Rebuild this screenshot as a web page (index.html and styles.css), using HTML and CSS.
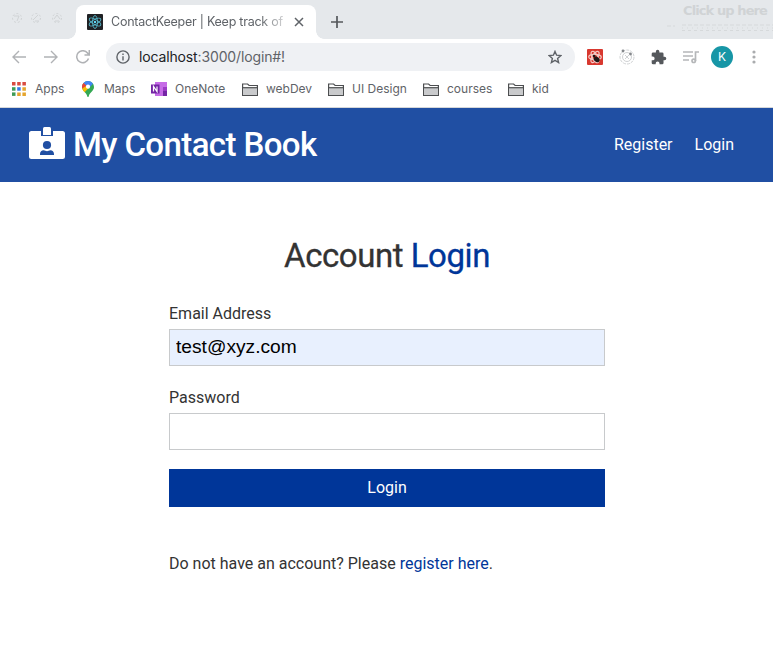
FILE: index.html
```html
<!DOCTYPE html>
<html lang="en">
<head>
<meta charset="utf-8">
<title>ContactKeeper | Keep track of</title>
<link rel="stylesheet" href="styles.css">
</head>
<body>
<div class="browser">
  <div class="tabstrip">
    <div class="lights">
      <svg width="52" height="14" viewBox="0 0 52 14" fill="none" stroke="#d0d3d5"><g stroke-dasharray="2 2"><circle cx="6" cy="7" r="4.500"/><circle cx="25" cy="7" r="4.500"/><circle cx="46" cy="7" r="4.500"/></g><path d="M3 5h5l-2 5M22 9l5-5M24 10h4M43 8l3-4 3 4M44 10h4"/></svg>
    </div>
    <div class="tab">
      <svg class="favicon" width="16" height="16" viewBox="0 0 16 16"><rect width="16" height="16" rx="1" fill="#202124"/><g fill="none" stroke="#56b5c8" stroke-width=".9"><ellipse cx="8" cy="8" rx="6.500" ry="2.500" transform="rotate(30 8 8)"/><ellipse cx="8" cy="8" rx="6.500" ry="2.500" transform="rotate(90 8 8)"/><ellipse cx="8" cy="8" rx="6.500" ry="2.500" transform="rotate(150 8 8)"/></g><circle cx="8" cy="8" r="1.200" fill="#61dafb"/></svg>
      <span class="tab-title">ContactKeeper | Keep track of</span>
      <svg class="close" width="10" height="10" viewBox="0 0 10 10" stroke="#5f6368" stroke-width="1.5"><path d="M1 1l8 8M9 1l-8 8"/></svg>
    </div>
    <svg class="plus" width="12" height="12" viewBox="0 0 12 12" stroke="#55585c" stroke-width="1.7"><path d="M6 0v12M0 6h12"/></svg>
    <div class="hint"><span>Click up here</span><svg width="106" height="8" viewBox="0 0 106 8" fill="none" stroke="#d6d9db"><path d="M0 2h8M15 1h106" stroke-dasharray="4 2"/><path d="M15 4h91" stroke-dasharray="1 4"/><path d="M15 6.500h91" stroke-dasharray="3 3"/></svg></div>
  </div>

  <div class="toolbar">
    <svg width="14" height="14" viewBox="0 0 14 14" fill="none" stroke="#b0b2b5" stroke-width="1.4"><path d="M14 7H1.500M7 1L1 7l6 6"/></svg>
    <svg width="14" height="14" viewBox="0 0 14 14" fill="none" stroke="#b0b2b5" stroke-width="1.4"><path d="M0 7h12.500M7 1l6 6-6 6"/></svg>
    <svg width="14" height="14" viewBox="0 0 14 14" fill="none" stroke="#b0b2b5" stroke-width="1.5"><path d="M12.500 8.500A6 6 0 1 1 11.500 3L13 5M13.300 0v5H8.500"/></svg>
    <div class="address">
      <svg width="14" height="14" viewBox="0 0 14 14" fill="none" stroke="#5f6368" stroke-width="1.4"><circle cx="7" cy="7" r="6.100"/><path d="M7 6.200v4.200M7 3.500v1.500"/></svg>
      <span class="url">localhost<span>:3000/login#!</span></span>
      <svg class="star" width="14" height="14" viewBox="0 0 14 14" fill="none" stroke="#5f6368" stroke-width="1.4"><path d="M7 1.400l1.600 3.800 4.200.4-3.200 2.800 1 4.100L7 10.300l-3.600 2.200 1-4.100L1.200 5.600l4.200-.4z"/></svg>
    </div>
    <div class="extensions">
      <svg width="16" height="16" viewBox="0 0 16 16"><rect width="16" height="16" rx="1" fill="#d8382f"/><g fill="none" stroke="#f5c9c5" stroke-width="1.200"><ellipse cx="8" cy="8" rx="6.300" ry="2.700"/><ellipse cx="8" cy="8" rx="6.300" ry="2.700" transform="rotate(60 8 8)"/><ellipse cx="8" cy="8" rx="6.300" ry="2.700" transform="rotate(120 8 8)"/></g><ellipse cx="10" cy="10.500" rx="3.200" ry="2.500" transform="rotate(40 10 10)" fill="#201818"/><circle cx="7" cy="7" r="1.300" fill="#201818"/></svg>
      <svg width="16" height="16" viewBox="0 0 16 16" fill="none" stroke="#d0d2d4"><circle cx="8" cy="8" r="7" stroke-dasharray="3 1"/><circle cx="8" cy="8" r="4.500"/><path d="M6 6l4 4M10 6l-4 4"/><g fill="#85888c" stroke="none"><circle cx="4" cy="2" r="1.400"/><circle cx="11.500" cy="5" r="1.400"/></g></svg>
      <svg width="16" height="16" viewBox="1 0 23 23" fill="#55585c"><path d="M20.500 11H19V7a2 2 0 0 0-2-2h-4V3.500a2.500 2.500 0 0 0-5 0V5H4a2 2 0 0 0-2 2v3.800h1.500a2.700 2.700 0 0 1 0 5.400H2V20a2 2 0 0 0 2 2h3.800v-1.500a2.700 2.700 0 0 1 5.400 0V22H17a2 2 0 0 0 2-2v-4h1.500a2.500 2.500 0 0 0 0-5z"/></svg>
      <svg width="17" height="14" viewBox="0 0 17 14" fill="none" stroke="#b5b7b9" stroke-width="1.700"><path d="M1 2h10M1 6h10M1 10h6M13.500 11V2H17"/><circle cx="11.700" cy="10.800" r="1.700"/></svg>
      <span class="avatar">K</span>
      <svg width="4" height="14" viewBox="0 0 4 14" fill="#aaacae"><circle cx="2" cy="2" r="1.600"/><circle cx="2" cy="7" r="1.600"/><circle cx="2" cy="12" r="1.600"/></svg>
    </div>
  </div>

  <div class="bookmarks">
    <div class="bookmark apps"><svg width="14" height="14" viewBox="0 0 14 14"><path fill="#d94b40" d="M0 0h3.500v3.500H0zM5.200 0h3.500v3.500H5.200zM10.400 0h3.500v3.500h-3.500z"/><path fill="#3d9b57" d="M0 5.200h3.500v3.500H0z"/><path fill="#3478e5" d="M5.200 5.200h3.500v3.500H5.200z"/><path fill="#e5a52d" d="M10.400 5.200h3.500v3.500h-3.500zM5.200 10.400h3.500v3.500H5.200zM10.400 10.400h3.500v3.500h-3.500z"/><path fill="#3d9b57" d="M0 10.400h3.500v3.500H0z"/></svg><span>Apps</span></div>
    <div class="bookmark maps"><svg width="12" height="16" viewBox="0 0 12 16"><path fill="#34a853" d="M6 0a6 6 0 0 1 6 6c0 4-4.500 5.500-5.300 9.400q-.7 1.200-1.400 0C4.500 11.500 0 10 0 6a6 6 0 0 1 6-6z"/><path fill="#4285f4" d="M1.500 2A6 6 0 0 1 11 2.700L6 8z"/><path fill="#ea4335" d="M1.500 2A6 6 0 0 0 .2 7.500L5 5z"/><path fill="#fbbc04" d="M.2 7.500q.6 2 2.500 3.800L8 5.500 5 4.500z"/><circle cx="6" cy="5.700" r="2.100" fill="#fff"/></svg><span>Maps</span></div>
    <div class="bookmark onenote"><svg width="16" height="14" viewBox="0 0 16 14"><path fill="#c66ce6" d="M4 0h12v14H4z"/><path fill="#9b3bc5" d="M12 5h4v4h-4z"/><path fill="#7425a5" d="M12 9h4v5h-4zM0 2.500h8.500v9H0z"/><path d="M2.500 9.500v-5l3.500 5v-5" fill="none" stroke="#fff" stroke-width="1.200"/></svg><span>OneNote</span></div>
    <div class="bookmark web"><svg width="16" height="13" viewBox="0 0 16 13"><path d="M.6 12.400V1h5l1.500 1.500h8.300v9.900z" fill="#fff" stroke="#4c4e50" stroke-width="1.200"/><path d="M1 5h14v7H1z" fill="#c9cacc"/><path d="M0 4.700h16" stroke="#4c4e50" stroke-width="1.200"/></svg><span>webDev</span></div>
    <div class="bookmark ui"><svg width="16" height="13" viewBox="0 0 16 13"><path d="M.6 12.400V1h5l1.500 1.500h8.300v9.900z" fill="#fff" stroke="#4c4e50" stroke-width="1.200"/><path d="M1 5h14v7H1z" fill="#c9cacc"/><path d="M0 4.700h16" stroke="#4c4e50" stroke-width="1.200"/></svg><span>UI Design</span></div>
    <div class="bookmark courses"><svg width="16" height="13" viewBox="0 0 16 13"><path d="M.6 12.400V1h5l1.500 1.500h8.300v9.900z" fill="#fff" stroke="#4c4e50" stroke-width="1.200"/><path d="M1 5h14v7H1z" fill="#c9cacc"/><path d="M0 4.700h16" stroke="#4c4e50" stroke-width="1.200"/></svg><span>courses</span></div>
    <div class="bookmark kid"><svg width="16" height="13" viewBox="0 0 16 13"><path d="M.6 12.400V1h5l1.500 1.500h8.300v9.900z" fill="#fff" stroke="#4c4e50" stroke-width="1.200"/><path d="M1 5h14v7H1z" fill="#c9cacc"/><path d="M0 4.700h16" stroke="#4c4e50" stroke-width="1.200"/></svg><span>kid</span></div>
  </div>
</div>

<nav class="navbar">
  <h1>
    <svg width="36" height="32" viewBox="0 0 36 32"><path fill="#fff" d="M2.500 4H12v5h12V4h9.500A2.500 2.500 0 0 1 36 6.500v23a2.500 2.500 0 0 1-2.500 2.500h-31A2.500 2.500 0 0 1 0 29.500v-23A2.500 2.500 0 0 1 2.500 4z"/><path fill="#fff" d="M15.500 0h5A1.500 1.500 0 0 1 22 1.500V8h-8V1.500A1.500 1.500 0 0 1 15.500 0z"/><circle cx="18" cy="18" r="4.100" fill="#204fa3"/><path fill="#204fa3" d="M11 28v-1c0-2.200 1.500-3.700 3.700-3.700 2 1.100 4.600 1.100 6.600 0 2.200 0 3.700 1.500 3.700 3.700v1z"/></svg>
    <span>My Contact Book</span>
  </h1>
  <div class="links"><a>Register</a><a>Login</a></div>
</nav>

<main class="form-container">
  <h2>Account <span>Login</span></h2>
  <form>
    <label for="email">Email Address</label>
    <input class="filled" id="email" type="text" value="test@xyz.com">
    <label for="password">Password</label>
    <input id="password" type="password">
    <button type="button">Login</button>
  </form>
  <p>Do not have an account? Please <a>register here</a>.</p>
</main>
</body>
</html>
```
FILE: styles.css
```css
* { box-sizing: border-box; margin: 0; padding: 0; }
body { width: 773px; height: 646px; overflow: hidden; background: #fff; color: #333; font: 16px/26px Roboto, sans-serif; }
svg { display: block; flex: none; }
.browser { height: 108px; border-bottom: 1px solid #d5d7d9; font-family: Inter, sans-serif; color: #5f6368; white-space: nowrap; }

.tabstrip { display: flex; align-items: center; height: 39px; background: #e5e8eb; }
.lights { width: 76px; padding: 0 0 3px 11px; }
.tab { position: relative; display: flex; align-items: center; width: 240px; height: 34px; margin-top: 5px; padding: 0 12px 0 11px; border-radius: 8px 8px 0 0; background: #fff; }
.tab::before, .tab::after { content: ""; position: absolute; bottom: 0; width: 8px; height: 8px; }
.tab::before { left: -8px; background: radial-gradient(circle at 0 0, transparent 7.5px, #fff 8px); }
.tab::after { right: -8px; background: radial-gradient(circle at 100% 0, transparent 7.5px, #fff 8px); }
.tab-title { width: 175px; margin-left: 8px; font-size: 12.5px; letter-spacing: -.24px; -webkit-mask-image: linear-gradient(90deg, #000 148px, transparent 182px); mask-image: linear-gradient(90deg, #000 148px, transparent 182px); }
.close { margin-left: auto; }
.plus { margin: 5px 0 0 15px; }
.hint { width: 90px; height: 39px; margin-left: auto; padding-top: 3px; color: #d0d3d5; font: 700 13px/16px "DejaVu Sans", sans-serif; letter-spacing: -.9px; }
.hint span { display: block; }
.hint svg { margin: 5px 0 0 -16px; }

.toolbar { display: flex; align-items: center; gap: 18px; height: 35px; padding: 1px 0 0 12px; }
.address { display: flex; align-items: center; width: 469px; height: 28px; margin-left: -2px; padding: 0 13px 0 10px; border-radius: 14px; background: #eff1f4; }
.url { margin-left: 9px; color: #202124; font-size: 14px; letter-spacing: -.14px; }
.url span { color: #5f6368; }
.star { margin-left: auto; }
.extensions { display: flex; align-items: center; gap: 16px; margin-left: -6px; }
.extensions svg:nth-child(4) { margin: 0 -4px 0 -1px; }
.extensions svg:last-child { margin-left: 3px; }
.avatar { width: 22px; height: 22px; border-radius: 50%; background: #1796a6; color: #fff; font-size: 12px; line-height: 22px; text-align: center; }

.bookmarks { display: grid; grid-template-columns: 70px 69px 91px 86px 95px 85px 80px; align-items: center; height: 30px; padding-left: 12px; font-size: 12px; }
.bookmark { display: flex; align-items: center; gap: 8px; }
.bookmark.apps { gap: 9px; }
.bookmark.maps { gap: 10px; }

.navbar { display: flex; align-items: center; justify-content: space-between; height: 74px; padding: 0 39px 0 29px; background: #204fa3; color: #fff; }
.navbar h1 { display: flex; align-items: center; gap: 8px; font-size: 33px; font-weight: 500; line-height: 40px; letter-spacing: -.6px; }
.navbar h1 svg { margin-top: -5px; }
.links { display: flex; gap: 22px; }

.form-container { width: 436px; margin: 54px 0 0 169px; }
h2 { margin-bottom: 25px; text-align: center; font-size: 33px; font-weight: 400; line-height: 40px; letter-spacing: -.45px; -webkit-text-stroke: .3px currentColor; }
h2 span, p a { color: #003699; }
label { display: block; }
input { display: block; width: 436px; height: 37px; margin: 2px 0 18px; padding: 0 6px 2px; border: 1px solid #c8cacc; background: #fff; color: #000; font: 19.2px "Liberation Sans", sans-serif; }
input.filled { margin-bottom: 19px; background: #e8f0fe; }
button { display: block; width: 436px; height: 38px; margin-top: 19px; padding-bottom: 2px; border: 0; background: #003699; color: #fff; font: 16px Roboto, sans-serif; }
p { margin-top: 44px; }
```
